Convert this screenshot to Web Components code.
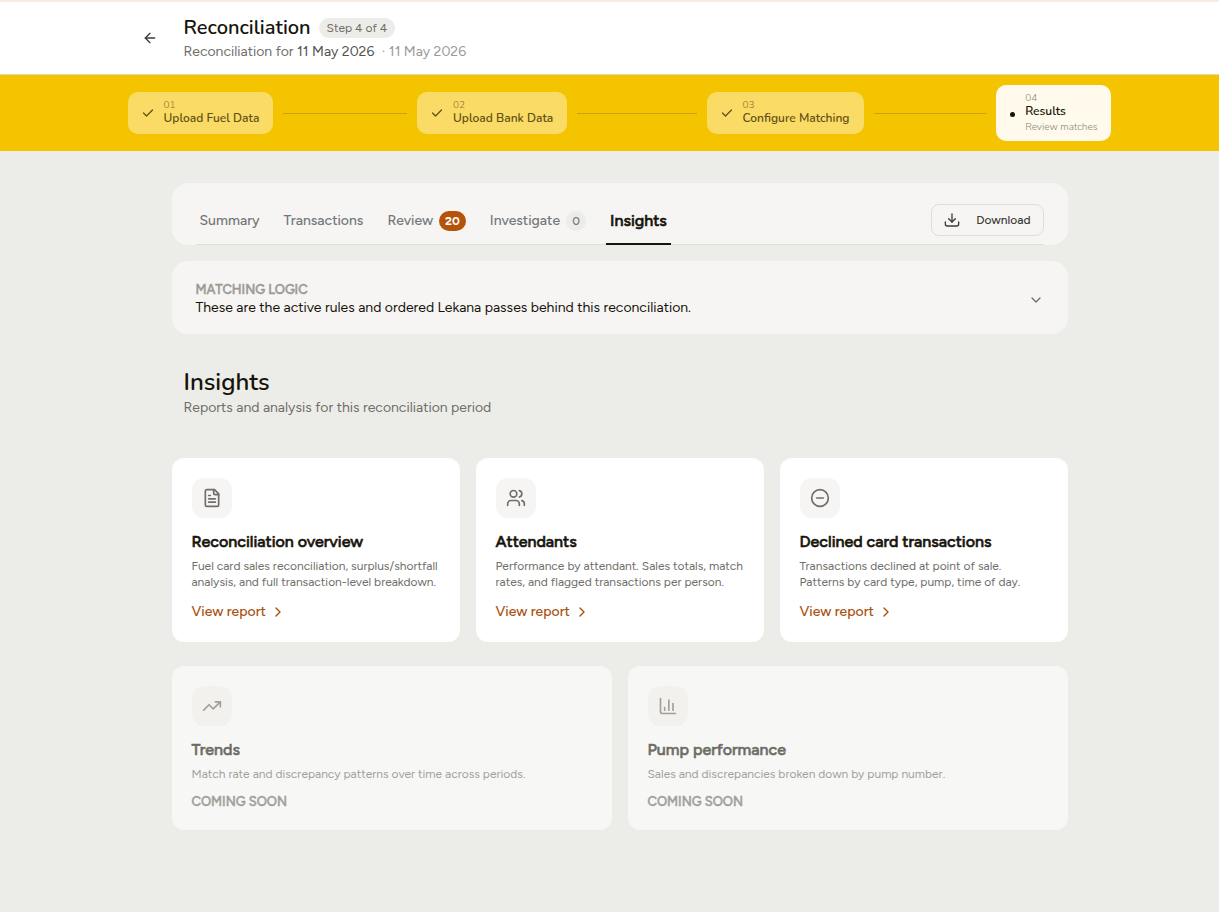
<!DOCTYPE html>
<html lang="en">
<head>
<meta charset="utf-8">
<meta name="viewport" content="width=device-width, initial-scale=1">
<title>Reconciliation</title>
<style>
  :root {
    --ink: #16130a;
    --muted: #6f6e69;
    --faint: #9b9a95;
    --rust: #a8510f;
    --panel: #f6f5f3;
    --line: #dedfdb;
    --yellow: #f5c400;
    --gutter: 20px;
    --head: Nunito, "Open Sans", "Noto Sans", sans-serif;
    --body: Figtree, Lato, "Noto Sans", sans-serif;
  }
  body {
    margin: 0;
    min-height: 100vh;
    background: #ecede8;
    color: var(--ink);
    font-family: var(--body);
    font-size: 14px;
  }
</style>
</head>
<body>
<recon-app></recon-app>

<script>
const icons = {
  back: '<path d="m12 19-7-7 7-7"/><path d="M19 12H5"/>',
  check: '<path d="M21 6 9 18l-6-6"/>',
  download: '<path d="M12 3v12"/><path d="m7 10 5 5 5-5"/><path d="M2 15v3a3 3 0 0 0 3 3h14a3 3 0 0 0 3-3v-3"/>',
  down: '<path d="m6 9 6 6 6-6"/>',
  right: '<path d="m9 18 6-6-6-6"/>',
  file: '<path d="M15 2H6a2 2 0 0 0-2 2v16a2 2 0 0 0 2 2h12a2 2 0 0 0 2-2V7Z"/><path d="M14 2v4a2 2 0 0 0 2 2h4"/><path d="M10 9H8"/><path d="M16 13H8"/><path d="M16 17H8"/>',
  users: '<path d="M16 21v-2a4 4 0 0 0-4-4H6a4 4 0 0 0-4 4v2"/><circle cx="9" cy="7" r="4"/><path d="M22 21v-2a4 4 0 0 0-3-3.87"/><path d="M16 3.13a4 4 0 0 1 0 7.75"/>',
  minus: '<circle cx="12" cy="12" r="10"/><path d="M8 12h8"/>',
  trend: '<path d="m22 7-8.5 8.5-5-5L2 17"/><path d="M16 7h6v6"/>',
  chart: '<path d="M3 3v16a2 2 0 0 0 2 2h16"/><path d="M8 17v-3"/><path d="M13 17V5"/><path d="M18 17V9"/>'
};

// shared by every element below
function render (el, html) {
  const template = document.createElement('template');
  template.innerHTML = html;
  el.attachShadow({ mode: 'open' });
  el.shadowRoot.appendChild(template.content.cloneNode(true));
}

class LineIcon extends HTMLElement {
  static get observedAttributes () {
    return ['name'];
  }

  constructor () {
    super();
    render(this, `
      <style>
        :host { display: inline-flex; flex: none; width: 16px; height: 16px; }
        svg { width: 100%; height: 100%; fill: none; stroke: currentColor; stroke-width: var(--stroke, 2); stroke-linecap: round; stroke-linejoin: round; }
      </style>
      <svg viewBox="0 0 24 24" aria-hidden="true"></svg>
    `);
  }

  attributeChangedCallback (attr, old, name) {
    this.shadowRoot.querySelector('svg').innerHTML = icons[name] || '';
  }
}

class PageHeader extends HTMLElement {
  constructor () {
    super();
    render(this, `
      <style>
        :host { display: block; background: #fff; border-top: 2px solid #f8ede4; border-bottom: 1px solid #e6dca9; padding-left: var(--gutter); }
        .wrap { max-width: 984px; margin: 0 auto; padding: 12px 0; display: flex; align-items: center; gap: 12px; }
        button { width: 44px; height: 44px; border: 0; background: none; padding: 0; color: #3d3b36; display: flex; align-items: center; justify-content: center; }
        .row { display: flex; align-items: center; gap: 8px; }
        h1 { margin: 0; font: 600 20px/28px var(--head); }
        .badge { background: #ecece8; color: var(--muted); border-radius: 10px; font-size: 12px; line-height: 20px; padding: 0 8px; }
        p { margin: 0; line-height: 20px; color: var(--muted); }
        b { font-weight: 400; color: #54524d; }
        .date { color: var(--faint); margin-left: 4px; }
      </style>
      <header class="wrap">
        <button aria-label="Back"><line-icon name="back"></line-icon></button>
        <div>
          <div class="row"><h1>Reconciliation</h1><span class="badge"><slot name="step"></slot></span></div>
          <p>Reconciliation for <b><slot name="date"></slot></b> <span class="date">· <slot name="day"></slot></span></p>
        </div>
      </header>
    `);
  }
}

class StepBar extends HTMLElement {
  constructor () {
    super();
    render(this, `
      <style>
        :host { display: block; background: var(--yellow); padding: 10px 0 10px var(--gutter); }
        .wrap { max-width: 984px; margin: 0 auto; display: flex; align-items: center; }
      </style>
      <div class="wrap" role="list"><slot></slot></div>
    `);
  }
}

class StepItem extends HTMLElement {
  constructor () {
    super();
    render(this, `
      <style>
        :host { display: flex; align-items: center; flex: 1; gap: 10px; }
        :host([current]) { flex: none; }
        .pill { display: flex; align-items: center; gap: 10px; padding: 8px 14px; border-radius: 10px; background: rgba(255, 255, 255, .4); color: #625114; font-family: var(--head); }
        .line { flex: 1; height: 1px; background: #c9a20a; margin-right: 10px; }
        .num { font-size: 10px; line-height: 11px; font-weight: 300; color: #8c7628; }
        .label { font-size: 12px; line-height: 15px; font-weight: 600; white-space: nowrap; }
        .note { font-size: 10px; line-height: 16px; font-weight: 300; color: #8d897e; }
        .dot, .note { display: none; }
        .dot { width: 5px; height: 5px; border-radius: 50%; background: var(--ink); }
        line-icon { width: 12px; height: 12px; --stroke: 2.5; }
        :host([current]) .pill { padding-bottom: 6px; background: #fffaeb; color: var(--ink); }
        :host([current]) .num { color: #8d897e; }
        :host([current]) .dot, :host([current]) .note { display: block; }
        :host([current]) .line, :host([current]) line-icon { display: none; }
      </style>
      <div class="pill">
        <line-icon name="check"></line-icon><span class="dot"></span>
        <div>
          <div class="num"><slot name="num"></slot></div>
          <div class="label"><slot></slot></div>
          <div class="note"><slot name="note"></slot></div>
        </div>
      </div>
      <span class="line"></span>
    `);
  }
}

class TabBar extends HTMLElement {
  constructor () {
    super();
    render(this, `
      <style>
        :host { display: block; background: var(--panel); border-radius: 16px; padding: 21px 24px 0; }
        .bar { display: flex; justify-content: space-between; align-items: flex-start; border-bottom: 1px solid var(--line); }
        nav { display: flex; gap: 16px; margin-bottom: -1px; }
        button { display: flex; align-items: center; gap: 16px; height: 32px; padding: 0 12px; border: 1px solid var(--line); border-radius: 8px; background: none; font: 500 12px var(--body); color: #3d3b36; }
      </style>
      <div class="bar">
        <nav><slot></slot></nav>
        <button><line-icon name="download"></line-icon>Download</button>
      </div>
    `);
  }
}

class TabLink extends HTMLElement {
  constructor () {
    super();
    render(this, `
      <style>
        :host { display: block; }
        a { display: flex; align-items: center; gap: 6px; padding: 7px 4px 12px; border-bottom: 2px solid transparent; line-height: 20px; font-weight: 500; color: #73777a; text-decoration: none; }
        :host([active]) a { font-size: 16px; font-weight: 500; -webkit-text-stroke: .6px; color: var(--ink); border-color: var(--ink); }
        ::slotted([slot=count]) { min-width: 8px; padding: 0 6px; border-radius: 10px; background: #ecece8; font-size: 12px; text-align: center; }
        :host([alert]) ::slotted([slot=count]) { background: #b45309; color: #fff; font-weight: 700; }
      </style>
      <a href="#"><slot></slot><slot name="count"></slot></a>
    `);
  }
}

class MatchingLogic extends HTMLElement {
  constructor () {
    super();
    render(this, `
      <style>
        :host { display: block; background: var(--panel); border-radius: 16px; }
        button { width: 100%; display: flex; justify-content: space-between; align-items: center; padding: 21px 24px 16px; border: 0; background: none; text-align: left; font: 14px/20px var(--body); color: var(--ink); }
        span { display: block; }
        .title { font-size: 13px; line-height: 16px; font-weight: 500; -webkit-text-stroke: .5px; text-transform: uppercase; color: var(--faint); }
        line-icon { color: var(--muted); }
      </style>
      <button aria-expanded="false">
        <span><span class="title"><slot name="title"></slot></span><span><slot></slot></span></span>
        <line-icon name="down"></line-icon>
      </button>
    `);
  }
}

class ReportCard extends HTMLElement {
  constructor () {
    super();
    render(this, `
      <style>
        :host { display: block; box-sizing: border-box; background: #fff; border-radius: 12px; padding: 20px; }
        :host([soon]) { opacity: .6; }
        .tile { display: flex; align-items: center; justify-content: center; width: 40px; height: 40px; border-radius: 12px; background: var(--panel); color: var(--muted); }
        .tile line-icon { width: 20px; height: 20px; }
        h3 { margin: 12px 0 4px; font-size: 16px; line-height: 24px; font-weight: 500; -webkit-text-stroke: .6px; }
        p { margin: 0 0 12px; font-size: 12px; line-height: 16px; color: var(--muted); }
        a { display: inline-flex; align-items: center; gap: 4px; line-height: 20px; font-weight: 500; color: var(--rust); text-decoration: none; vertical-align: top; }
        .soon { display: none; font-size: 13px; line-height: 16px; font-weight: 500; -webkit-text-stroke: .5px; color: var(--muted); }
        :host([soon]) .soon { display: block; }
        :host([soon]) a { display: none; }
      </style>
      <div class="tile"><line-icon></line-icon></div>
      <h3><slot name="title"></slot></h3>
      <p><slot></slot></p>
      <a href="#">View report <line-icon name="right"></line-icon></a>
      <div class="soon">COMING SOON</div>
    `);
  }

  connectedCallback () {
    this.shadowRoot.querySelector('.tile line-icon').setAttribute('name', this.getAttribute('icon'));
  }
}

class ReconApp extends HTMLElement {
  constructor () {
    super();
    render(this, `
      <style>
        :host { display: block; }
        main { padding: 32px 0 82px var(--gutter); }
        .wrap { max-width: 896px; margin: 0 auto; }
        matching-logic { margin: 16px 0 32px; }
        .intro { padding: 0 12px; margin-bottom: 40px; }
        h2 { margin: 0; font: 600 24px/32px var(--head); }
        .intro p { margin: 0; line-height: 20px; color: var(--muted); }
        .grid { display: grid; grid-template-columns: repeat(3, 1fr); gap: 16px; }
        .grid.two { grid-template-columns: repeat(2, 1fr); margin-top: 24px; }
      </style>
      <page-header>
        <span slot="step">Step 4 of 4</span>
        <span slot="date">11 May 2026</span>
        <span slot="day">11 May 2026</span>
      </page-header>
      <step-bar>
        <step-item role="listitem"><span slot="num">01</span>Upload Fuel Data</step-item>
        <step-item role="listitem"><span slot="num">02</span>Upload Bank Data</step-item>
        <step-item role="listitem"><span slot="num">03</span>Configure Matching</step-item>
        <step-item role="listitem" current><span slot="num">04</span>Results<span slot="note">Review matches</span></step-item>
      </step-bar>
      <main>
        <div class="wrap">
          <tab-bar>
            <tab-link>Summary</tab-link>
            <tab-link>Transactions</tab-link>
            <tab-link alert>Review<span slot="count">20</span></tab-link>
            <tab-link>Investigate<span slot="count">0</span></tab-link>
            <tab-link active>Insights</tab-link>
          </tab-bar>
          <matching-logic>
            <span slot="title">Matching logic</span>These are the active rules and ordered Lekana passes behind this reconciliation.
          </matching-logic>
          <div class="intro">
            <h2>Insights</h2>
            <p>Reports and analysis for this reconciliation period</p>
          </div>
          <div class="grid">
            <report-card icon="file"><span slot="title">Reconciliation overview</span>Fuel card sales reconciliation, surplus/shortfall analysis, and full transaction-level breakdown.</report-card>
            <report-card icon="users"><span slot="title">Attendants</span>Performance by attendant. Sales totals, match rates, and flagged transactions per person.</report-card>
            <report-card icon="minus"><span slot="title">Declined card transactions</span>Transactions declined at point of sale. Patterns by card type, pump, time of day.</report-card>
          </div>
          <div class="grid two">
            <report-card soon icon="trend"><span slot="title">Trends</span>Match rate and discrepancy patterns over time across periods.</report-card>
            <report-card soon icon="chart"><span slot="title">Pump performance</span>Sales and discrepancies broken down by pump number.</report-card>
          </div>
        </div>
      </main>
    `);
  }
}

customElements.define('line-icon', LineIcon);
customElements.define('page-header', PageHeader);
customElements.define('step-bar', StepBar);
customElements.define('step-item', StepItem);
customElements.define('tab-bar', TabBar);
customElements.define('tab-link', TabLink);
customElements.define('matching-logic', MatchingLogic);
customElements.define('report-card', ReportCard);
customElements.define('recon-app', ReconApp);
</script>
</body>
</html>
